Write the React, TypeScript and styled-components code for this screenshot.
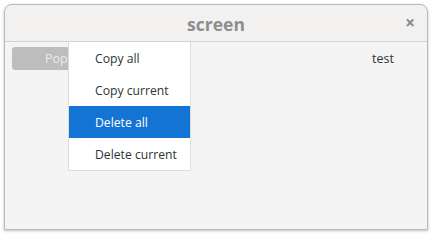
import React from 'react';
import styled, { createGlobalStyle } from 'styled-components';

const GlobalStyle = createGlobalStyle`
  html, body {
    margin: 0;
    padding: 0;
    background: #ffffff;
    font-family: 'Open Sans', 'Noto Sans', sans-serif;
  }
`;

const Window = styled.div`
  position: relative;
  margin: 4px;
  width: 424px;
  height: 226px;
  box-sizing: border-box;
  border: 1px solid #b8b8b6;
  border-radius: 8px 8px 0 0;
  background: #f4f4f4;
  box-shadow: 0 1px 3px rgba(0, 0, 0, 0.25);
  display: flex;
  flex-direction: column;
`;

const TitleBar = styled.div`
  height: 37px;
  box-sizing: border-box;
  border-bottom: 1px solid #d6d3cf;
  background: #f2f1f0;
  border-radius: 8px 8px 0 0;
  display: flex;
  align-items: center;
  justify-content: center;
  position: relative;
  padding-top: 1px;
`;

const Title = styled.span`
  font-size: 17.5px;
  font-weight: bold;
  color: #8e8e8e;
`;

const CloseButton = styled.span`
  position: absolute;
  right: 12px;
  top: 9px;
  font-size: 17px;
  font-weight: bold;
  color: #8a8a8a;
  line-height: 17px;
`;

const Content = styled.div`
  position: relative;
  flex: 1;
  padding: 5px 33px 0 7px;
  display: flex;
  align-items: flex-start;
`;

const Row = styled.div`
  display: flex;
  align-items: center;
  width: 100%;
`;

const PopButton = styled.div`
  width: 104px;
  height: 23px;
  border-radius: 3px;
  background: #bdbdbd;
  color: #eaeaea;
  font-size: 12.5px;
  display: flex;
  align-items: center;
  justify-content: center;
`;

const Label = styled.span`
  margin-left: auto;
  font-size: 12.5px;
  color: #2e3436;
`;

const Menu = styled.div`
  position: absolute;
  z-index: 1;
  left: 63px;
  top: 0;
  width: 123px;
  background: #ffffff;
  border: 1px solid #dcdcdc;
  border-top: none;
  box-sizing: border-box;
  display: flex;
  flex-direction: column;
`;

const MenuItem = styled.div<{ $active?: boolean }>`
  height: 32px;
  display: flex;
  align-items: center;
  padding-left: 26px;
  font-size: 12.2px;
  color: ${p => (p.$active ? '#ffffff' : '#2e3436')};
  background: ${p => (p.$active ? '#1474d4' : 'transparent')};
`;

const items = ['Copy all', 'Copy current', 'Delete all', 'Delete current'];

const App: React.FC = () => {
  return (
    <>
      <GlobalStyle />
      <Window>
        <TitleBar>
          <Title>screen</Title>
          <CloseButton>×</CloseButton>
        </TitleBar>
        <Content>
          <Row>
            <PopButton>Popup</PopButton>
            <Label>test</Label>
          </Row>
          <Menu>
            {items.map(item => (
              <MenuItem key={item} $active={item === 'Delete all'}>
                {item}
              </MenuItem>
            ))}
          </Menu>
        </Content>
      </Window>
    </>
  );
};

export default App;
